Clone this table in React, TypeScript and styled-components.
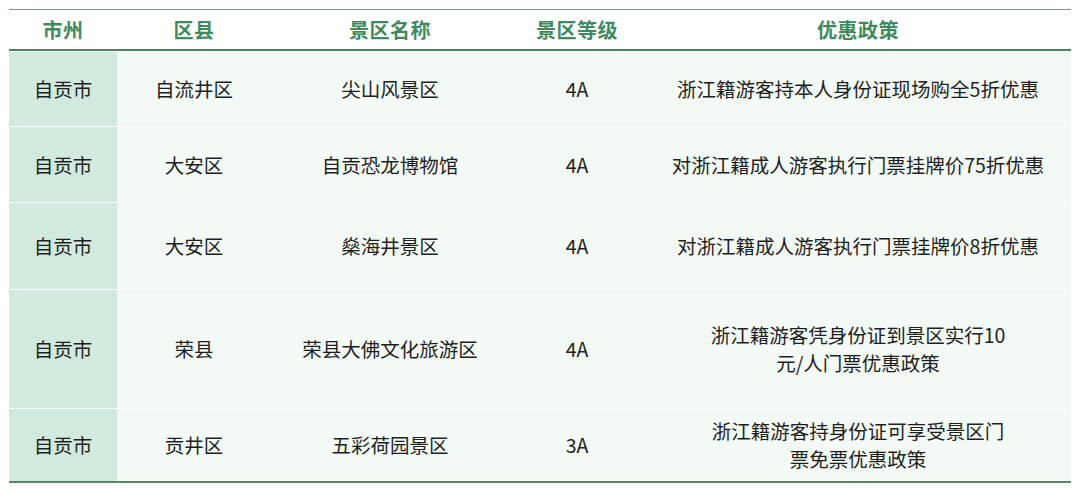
import styled, { createGlobalStyle } from "styled-components";

const GlobalStyle = createGlobalStyle`
  html, body {
    margin: 0;
    padding: 0;
    background: #ffffff;
  }
  body {
    font-family: "Noto Sans CJK SC", "Noto Sans", sans-serif;
  }
`;

const COLUMNS = "108px 154px 238px 136px 426px";

const Page = styled.div`
  width: 1080px;
  height: 491px;
  padding: 9px 0 0 9px;
  box-sizing: border-box;
`;

const Table = styled.div`
  width: 1062px;
  border-top: 1px solid #7f9c8a;
  border-bottom: 2px solid #5b8468;
  display: flex;
  flex-direction: column;
  gap: 1px;
  background: #ffffff;
`;

const HeadRow = styled.div`
  display: grid;
  grid-template-columns: ${COLUMNS};
  height: 39px;
  border-bottom: 2px solid #4f8060;
  align-items: center;
`;

const HeadCell = styled.div`
  text-align: center;
  font-size: 20px;
  font-weight: 700;
  color: #3f8a5c;
  letter-spacing: 0.5px;
`;

const Row = styled.div<{ h: number }>`
  display: grid;
  grid-template-columns: ${COLUMNS};
  height: ${(p) => p.h}px;
`;

const Cell = styled.div<{ first?: boolean }>`
  display: flex;
  align-items: center;
  justify-content: center;
  text-align: center;
  background: ${(p) => (p.first ? "#d1eadd" : "#f3faf6")};
  color: #1e1e1e;
  font-size: 19.5px;
  line-height: 28px;
  padding: 0 2px;
`;

const rows = [
  { h: 74, city: "自贡市", county: "自流井区", name: "尖山风景区", level: "4A", policy: ["浙江籍游客持本人身份证现场购全5折优惠"] },
  { h: 75, city: "自贡市", county: "大安区", name: "自贡恐龙博物馆", level: "4A", policy: ["对浙江籍成人游客执行门票挂牌价75折优惠"] },
  { h: 86, city: "自贡市", county: "大安区", name: "燊海井景区", level: "4A", policy: ["对浙江籍成人游客执行门票挂牌价8折优惠"] },
  { h: 118, city: "自贡市", county: "荣县", name: "荣县大佛文化旅游区", level: "4A", policy: ["浙江籍游客凭身份证到景区实行10", "元/人门票优惠政策"] },
  { h: 72, city: "自贡市", county: "贡井区", name: "五彩荷园景区", level: "3A", policy: ["浙江籍游客持身份证可享受景区门", "票免票优惠政策"] },
];

const App = () => {
  return (
    <Page>
      <GlobalStyle />
      <Table>
        <HeadRow>
          <HeadCell>市州</HeadCell>
          <HeadCell>区县</HeadCell>
          <HeadCell>景区名称</HeadCell>
          <HeadCell>景区等级</HeadCell>
          <HeadCell>优惠政策</HeadCell>
        </HeadRow>
        {rows.map((r, i) => (
          <Row key={i} h={r.h}>
            <Cell first>{r.city}</Cell>
            <Cell>{r.county}</Cell>
            <Cell>{r.name}</Cell>
            <Cell>{r.level}</Cell>
            <Cell>
              <div>
                {r.policy.map((line, j) => (
                  <div key={j}>{line}</div>
                ))}
              </div>
            </Cell>
          </Row>
        ))}
      </Table>
    </Page>
  );
};

export default App;
